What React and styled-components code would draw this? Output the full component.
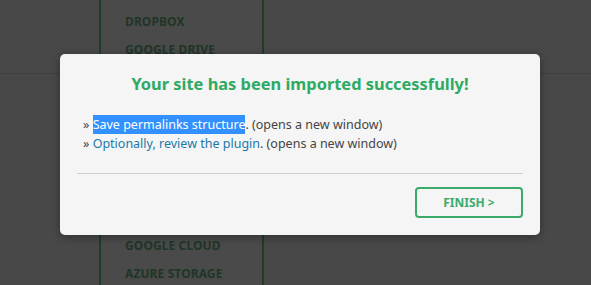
import React from 'react'
import styled, { createGlobalStyle } from 'styled-components'

const Global = createGlobalStyle`
  html, body {
    margin: 0;
    padding: 0;
    background: #484848;
    font-family: "Noto Sans", "Open Sans", sans-serif;
  }
`

const Page = styled.div`
  position: relative;
  width: 591px;
  height: 285px;
  overflow: hidden;
  display: flex;
`

const Side = styled.div`
  width: ${p => p.w}px;
  flex: ${p => (p.grow ? '1' : 'none')};
  padding-top: 73px;
  box-sizing: border-box;
`

const SideLine = styled.div`
  height: 1px;
  background: #3e3e3e;
`

const Menu = styled.ul`
  list-style: none;
  margin: 0;
  padding: 11px 0 0 24px;
  width: 165px;
  box-sizing: border-box;
  border-left: 2px solid #1d3f26;
  border-right: 2px solid #1d3f26;
  background: #4a4a4a;
`

const MenuItem = styled.li`
  height: 28px;
  line-height: 22px;
  font-size: 12px;
  font-weight: 700;
  color: #1f3626;
  letter-spacing: 0.1px;
`

const Modal = styled.div`
  position: absolute;
  left: 60px;
  top: 54px;
  width: 480px;
  height: 181px;
  box-sizing: border-box;
  background: #f5f5f5;
  border-radius: 5px;
  box-shadow: 0 2px 8px rgba(0, 0, 0, 0.35);
  padding: 16px 17px 0;
`

const Title = styled.h2`
  margin: 0;
  text-align: center;
  font-size: 16.4px;
  font-weight: 700;
  color: #2eaa62;
  line-height: 28px;
`

const Steps = styled.div`
  margin: 17px 0 0 6px;
  font-size: 12.5px;
  line-height: 19px;
  color: #444;
`

const Link = styled.a`
  color: ${p => (p.selected ? '#fff' : '#1b78a8')};
  background: ${p => (p.selected ? '#3390ff' : 'transparent')};
  text-decoration: none;
  padding: 1px 0;
`

const Divider = styled.hr`
  margin: 20px 0 0;
  border: 0;
  border-top: 1px solid #cfcfcf;
`

const Footer = styled.div`
  display: flex;
  justify-content: flex-end;
  padding-top: 13px;
`

const Button = styled.button`
  width: 108px;
  height: 31px;
  background: transparent;
  border: 2px solid #3aab6a;
  border-radius: 4px;
  color: #3aab6a;
  font-family: inherit;
  font-size: 12px;
  font-weight: 700;
`

const items = ['DROPBOX', 'GOOGLE DRIVE', '', '', '', '', '', '', 'GOOGLE CLOUD', 'AZURE STORAGE']

export default function App() {
  return (
    <>
      <Global />
      <Page>
        <Side w={99}><SideLine /></Side>
        <Menu>
          {items.map((n, i) => (
            <MenuItem key={i}>{n}</MenuItem>
          ))}
        </Menu>
        <Side grow><SideLine /></Side>
        <Modal>
          <Title>Your site has been imported successfully!</Title>
          <Steps>
            <div>» <Link selected>Save permalinks structure</Link>. (opens a new window)</div>
            <div>» <Link>Optionally, review the plugin</Link>. (opens a new window)</div>
          </Steps>
          <Divider />
          <Footer>
            <Button>FINISH &gt;</Button>
          </Footer>
        </Modal>
      </Page>
    </>
  )
}
